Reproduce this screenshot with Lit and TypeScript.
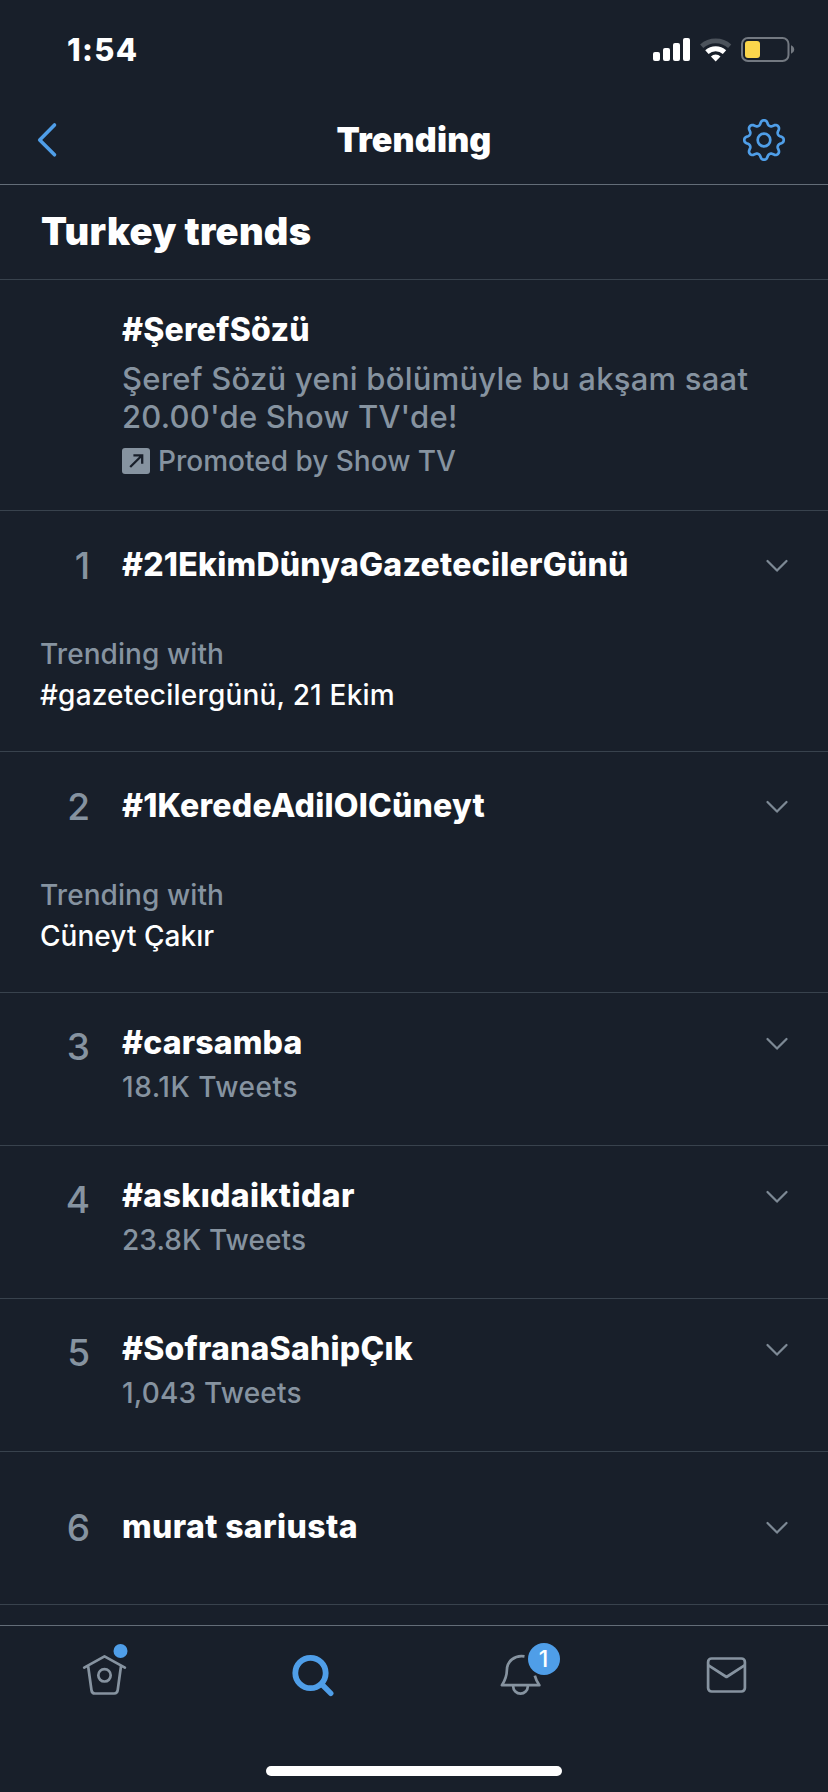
import { LitElement, html, css, svg, nothing } from "lit";
import { customElement, property } from "lit/decorators.js";
import { styleMap } from "lit/directives/style-map.js";

interface Trend {
  rank: number;
  name: string;
  tracking: number;
  tweets?: string;
  tweetsTracking?: number;
  related?: string;
  relatedTracking?: number;
}

const trends: Trend[] = [
  { rank: 1, name: "#21EkimDünyaGazetecilerGünü", tracking: 0.24, related: "#gazetecilergünü, 21 Ekim", relatedTracking: 0.2 },
  { rank: 2, name: "#1KeredeAdilOlCüneyt", tracking: 0.22, related: "Cüneyt Çakır", relatedTracking: 0.05 },
  { rank: 3, name: "#carsamba", tracking: 0.16, tweets: "18.1K Tweets", tweetsTracking: 0.54 },
  { rank: 4, name: "#askıdaiktidar", tracking: 0.38, tweets: "23.8K Tweets", tweetsTracking: 0.1 },
  { rank: 5, name: "#SofranaSahipÇık", tracking: 0.22, tweets: "1,043 Tweets", tweetsTracking: 0.2 },
  { rank: 6, name: "murat sariusta", tracking: 0.38 },
];

const spacing = (px = 0) => styleMap({ letterSpacing: `${px}px` });

// Eight-toothed gear outline around (22, 22).
const gearPath = (() => {
  const pts: string[] = [];
  for (let i = 0; i < 240; i++) {
    const a = (i / 240) * Math.PI * 2;
    const r = 17.4 + (2.3 * Math.tanh(1.2 * Math.cos(8 * a))) / Math.tanh(1.2);
    pts.push(`${(22 + r * Math.sin(a)).toFixed(2)} ${(22 - r * Math.cos(a)).toFixed(2)}`);
  }
  return `M${pts.join("L")}Z`;
})();

@customElement("trend-row")
class TrendRow extends LitElement {
  @property({ attribute: false }) trend!: Trend;

  static styles = css`
    :host {
      display: block;
      box-sizing: border-box;
      height: 153px;
      padding: 30px 0 0 41px;
      border-bottom: 1px solid #38424d;
    }
    :host([kind="related"]) { height: 241px; padding-top: 34px; }
    :host([kind="plain"]) { padding-top: 55px; }
    .head {
      display: grid;
      grid-template-columns: 49px 1fr 22px;
      column-gap: 32px;
      padding-right: 40px;
    }
    .rank {
      font-size: 37px;
      line-height: 40px;
      font-weight: 500;
      text-align: right;
      color: #8693a0;
      padding-top: 1px;
    }
    :host([kind="tweets"]) .rank { padding-top: 4px; }
    .name {
      font-size: 32px;
      line-height: 40px;
      font-weight: 800;
      color: #fff;
      white-space: nowrap;
    }
    .sub {
      font-size: 28px;
      line-height: 40px;
      font-weight: 500;
      color: #8693a0;
      margin-top: 4px;
    }
    .chevron { display: block; margin-top: 14px; }
    .related {
      margin: 48px 0 0 -1px;
      font-size: 28px;
      line-height: 41px;
      font-weight: 500;
      color: #fff;
    }
    .label { color: #8693a0; letter-spacing: 0.08px; }
  `;

  render() {
    const t = this.trend;
    return html`
      <div class="head">
        <div class="rank">${t.rank}</div>
        <div>
          <div class="name" style=${spacing(t.tracking)}>${t.name}</div>
          ${t.tweets ? html`<div class="sub" style=${spacing(t.tweetsTracking)}>${t.tweets}</div>` : nothing}
        </div>
        <svg class="chevron" width="22" height="14" viewBox="0 0 22 14" fill="none" stroke="#7d8995" stroke-width="2.2" stroke-linecap="round" stroke-linejoin="round">
          <path d="M1.5 2 11 11.6 20.5 2" />
        </svg>
      </div>
      ${t.related
        ? html`<div class="related">
            <div class="label">Trending with</div>
            <div style=${spacing(t.relatedTracking)}>${t.related}</div>
          </div>`
        : nothing}
    `;
  }
}

@customElement("app-root")
class AppRoot extends LitElement {
  static styles = css`
    :host {
      display: flex;
      flex-direction: column;
      box-sizing: border-box;
      width: 828px;
      height: 1792px;
      overflow: hidden;
      background: #181f2a;
      color: #fff;
      font-family: Inter, "Liberation Sans", sans-serif;
    }
    svg { display: block; }
    .status {
      display: flex;
      justify-content: space-between;
      height: 96px;
      padding: 30px 28px 0 67px;
      box-sizing: border-box;
    }
    .status svg { margin-top: -1px; }
    .time {
      font-size: 31px;
      line-height: 40px;
      font-weight: 800;
      letter-spacing: 1.3px;
    }
    .nav {
      display: grid;
      grid-template-columns: 64px 1fr 64px;
      align-items: center;
      height: 89px;
      box-sizing: border-box;
      border-bottom: 1px solid #636d78;
    }
    .title {
      text-align: center;
      font-size: 34px;
      line-height: 40px;
      font-weight: 900;
      letter-spacing: 0.15px;
    }
    .back { padding-left: 34px; }
    .gear { margin-left: -22px; }
    .section {
      height: 95px;
      box-sizing: border-box;
      padding: 23px 0 0 41px;
      border-bottom: 1px solid #38424d;
      font-size: 38px;
      line-height: 46px;
      font-weight: 900;
      letter-spacing: 0.3px;
    }
    .promo {
      height: 231px;
      box-sizing: border-box;
      padding: 30px 60px 0 122px;
      border-bottom: 1px solid #38424d;
      color: #8693a0;
    }
    .promo-title {
      color: #fff;
      font-size: 32px;
      line-height: 40px;
      font-weight: 800;
      letter-spacing: 0.25px;
    }
    .desc {
      margin-top: 10px;
      font-size: 31px;
      line-height: 38px;
      font-weight: 500;
      letter-spacing: 0.24px;
      white-space: nowrap;
    }
    .by {
      display: flex;
      align-items: center;
      gap: 8px;
      margin-top: 8px;
      font-size: 28px;
      line-height: 34px;
      font-weight: 500;
    }
    .tabs {
      margin-top: 20px;
      height: 90px;
      display: grid;
      grid-template-columns: repeat(4, 1fr);
      justify-items: center;
      padding-top: 14px;
      border-top: 1px solid #636d78;
    }
    .tab { position: relative; }
    .badge {
      position: absolute;
      left: 50px;
      top: 3px;
      width: 32px;
      height: 32px;
      border-radius: 50%;
      background: #4f9ee8;
      color: #fff;
      font-size: 23px;
      line-height: 32px;
      font-weight: 500;
      text-align: center;
    }
    .home-bar {
      width: 296px;
      height: 10px;
      border-radius: 5px;
      background: #fff;
      margin: 36px auto 0;
    }
  `;

  private tabIcon(x: number, body: unknown) {
    return html`<svg width="80" height="60" viewBox="${x} 1640 80 60" fill="none" stroke="#8693a0" stroke-width="2.7" stroke-linecap="round" stroke-linejoin="round">${body}</svg>`;
  }

  render() {
    return html`
      <div class="status">
        <div class="time">1:54</div>
        <svg width="148" height="40" viewBox="652 29 148 40" fill="#fff">
          <rect x="653" y="52" width="7" height="9" rx="2" />
          <rect x="663" y="48" width="7" height="13" rx="2" />
          <rect x="673" y="43" width="7" height="18" rx="2" />
          <rect x="683" y="38" width="7" height="23" rx="2" />
          <path d="M701.7 46.2A21 21 0 0 1 729.7 46.2" fill="none" stroke="#4b525b" stroke-width="4.8" />
          <path d="M706.9 52.2A13.2 13.2 0 0 1 724.5 52.2" fill="none" stroke="#fff" stroke-width="5" />
          <path d="M715.7 61.4 710.9 56.6A6.8 6.8 0 0 1 720.5 56.6Z" />
          <rect x="742" y="38" width="46.5" height="23" rx="6" fill="none" stroke="#737981" stroke-width="2" />
          <rect x="745" y="41" width="15" height="17" rx="3" fill="#fbd64c" />
          <path d="M791 45.3Q794.2 46.8 794.2 49.5T791 53.7Z" fill="#737981" />
        </svg>
      </div>

      <div class="nav">
        <svg class="back" width="26" height="40" viewBox="34 119.5 26 40" fill="none" stroke="#4f9ee8" stroke-width="3.6" stroke-linecap="round" stroke-linejoin="round">
          <path d="M54.5 124.5 39.7 139.4 54.5 154.3" />
        </svg>
        <div class="title">Trending</div>
        <svg class="gear" width="44" height="44" viewBox="0 0 44 44" fill="none" stroke="#4f9ee8" stroke-width="2.7" stroke-linejoin="round">
          <path d=${gearPath} />
          <circle cx="22" cy="22" r="6.3" />
        </svg>
      </div>

      <div class="section">Turkey trends</div>

      <div class="promo">
        <div class="promo-title">#ŞerefSözü</div>
        <div class="desc">
          Şeref Sözü yeni bölümüyle bu akşam saat<br />20.00'de Show TV'de!
        </div>
        <div class="by">
          <svg width="28" height="26" viewBox="0 0 28 26">
            <rect width="28" height="26" rx="3" fill="#8693a0" />
            <path d="M8.2 19 19.6 7.8M11.4 7.3H20.2V15.8" fill="none" stroke="#181f2a" stroke-width="2.3" />
          </svg>
          <span>Promoted by Show TV</span>
        </div>
      </div>

      ${trends.map(
        (t) => html`<trend-row kind=${t.related ? "related" : t.tweets ? "tweets" : "plain"} .trend=${t}></trend-row>`
      )}

      <div class="tabs">
        <div class="tab">
          ${this.tabIcon(63.5, svg`
            <path d="M83.7 1667.6 104 1656.4 124.4 1667.6M87.6 1666 91 1690.2Q91.4 1693.5 94.4 1693.5H113.8Q116.8 1693.5 117.2 1690.2L120.5 1666" />
            <circle cx="104" cy="1675.3" r="6.2" />
            <circle cx="120" cy="1651" r="7" fill="#4f9ee8" stroke="none" />`)}
        </div>
        <div class="tab">
          ${this.tabIcon(270.5, svg`
            <g stroke="#4f9ee8"><circle cx="310" cy="1673" r="15.2" stroke-width="5.8" />
            <path d="M321.5 1684.5 330.3 1693.4" stroke-width="5.4" /></g>`)}
        </div>
        <div class="tab">
          ${this.tabIcon(477.5, svg`
            <path stroke-linecap="butt" d="M524 1656.4C514 1654.8 506.5 1661.5 506.4 1670C506.3 1677.5 504.2 1681 501.4 1685.2H538.9C536.5 1682 535.2 1679 534.3 1675.6" />
            <path d="M512.7 1686.4A7.3 7.3 0 0 0 527.3 1686.4" />`)}
          <span class="badge">1</span>
        </div>
        <div class="tab">
          ${this.tabIcon(684.5, svg`
            <rect x="707.6" y="1658.5" width="36.8" height="33" rx="3.5" />
            <path d="M708 1665.4 726 1677 744 1665.4" />`)}
        </div>
      </div>
      <div class="home-bar"></div>
    `;
  }
}
